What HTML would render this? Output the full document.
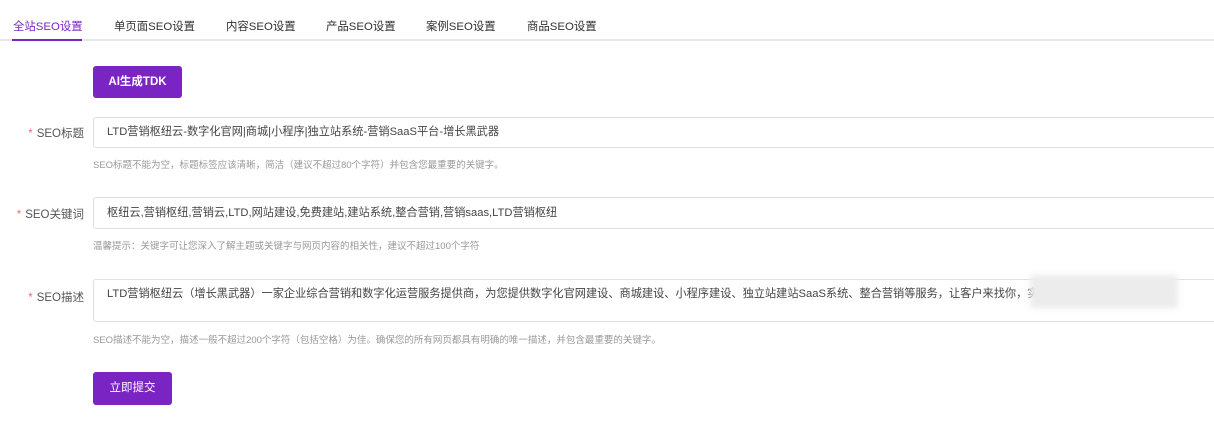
<!DOCTYPE html>
<html><head><meta charset="utf-8"><style>
*{box-sizing:border-box;margin:0;padding:0}
body{width:1214px;height:435px;background:#fff;font-family:"Liberation Sans","Noto Sans CJK SC",sans-serif;color:#333;position:relative;overflow:hidden}
.tabs{position:absolute;left:0;top:0;width:1214px;height:41px;border-bottom:2px solid #e4e7ed}
.tab{position:absolute;top:18px;font-size:11.4px;color:#303133}
.tab.a{color:#7b24c4}
.ul{position:absolute;left:12px;top:39px;width:70px;height:2px;background:#7b24c4}
.btn{position:absolute;background:#7b24c4;color:#fff;font-size:11.5px;border-radius:3px;text-align:center;font-weight:bold}
.lbl{position:absolute;right:1130px;font-size:11.5px;color:#555;text-align:right;white-space:nowrap}
.lbl b{color:#f56c6c;font-weight:normal;margin-right:4px}
.inp{position:absolute;left:93px;width:1130px;border:1px solid #dcdfe6;border-radius:3px;font-size:11.2px;color:#444;padding-left:13px}
.help{position:absolute;left:93px;font-size:9.5px;color:#999}
</style></head><body>
<div class="tabs">
<span class="tab a" style="left:13px">全站SEO设置</span>
<span class="tab" style="left:114px">单页面SEO设置</span>
<span class="tab" style="left:226px">内容SEO设置</span>
<span class="tab" style="left:326px">产品SEO设置</span>
<span class="tab" style="left:426px">案例SEO设置</span>
<span class="tab" style="left:527px">商品SEO设置</span>
<div class="ul"></div>
</div>
<div class="btn" style="left:93px;top:66px;width:89px;height:32px;line-height:32px">AI生成TDK</div>
<div class="lbl" style="top:125px"><b>*</b>SEO标题</div>
<div class="inp" style="top:117px;height:31px;line-height:29px">LTD营销枢纽云-数字化官网|商城|小程序|独立站系统-营销SaaS平台-增长黑武器</div>
<div class="help" style="top:157px">SEO标题不能为空，标题标签应该清晰，简洁（建议不超过80个字符）并包含您最重要的关键字。</div>
<div class="lbl" style="top:206px"><b>*</b>SEO关键词</div>
<div class="inp" style="top:197px;height:32px;line-height:30px">枢纽云,营销枢纽,营销云,LTD,网站建设,免费建站,建站系统,整合营销,营销saas,LTD营销枢纽</div>
<div class="help" style="top:238px">温馨提示：关键字可让您深入了解主题或关键字与网页内容的相关性，建议不超过100个字符</div>
<div class="lbl" style="top:289px"><b>*</b>SEO描述</div>
<div class="inp" style="top:279px;height:43px;padding-top:6px;line-height:16px;white-space:nowrap;overflow:hidden">LTD营销枢纽云（增长黑武器）一家企业综合营销和数字化运营服务提供商，为您提供数字化官网建设、商城建设、小程序建设、独立站建站SaaS系统、整合营销等服务，让客户来找你，实</div>
<div style="position:absolute;left:1030px;top:275px;width:148px;height:33px;background:#ececec;filter:blur(3px)"></div>
<div class="help" style="top:332px">SEO描述不能为空，描述一般不超过200个字符（包括空格）为佳。确保您的所有网页都具有明确的唯一描述，并包含最重要的关键字。</div>
<div class="btn" style="left:93px;top:372px;width:79px;height:33px;line-height:33px;font-weight:normal">立即提交</div>
</body></html>
